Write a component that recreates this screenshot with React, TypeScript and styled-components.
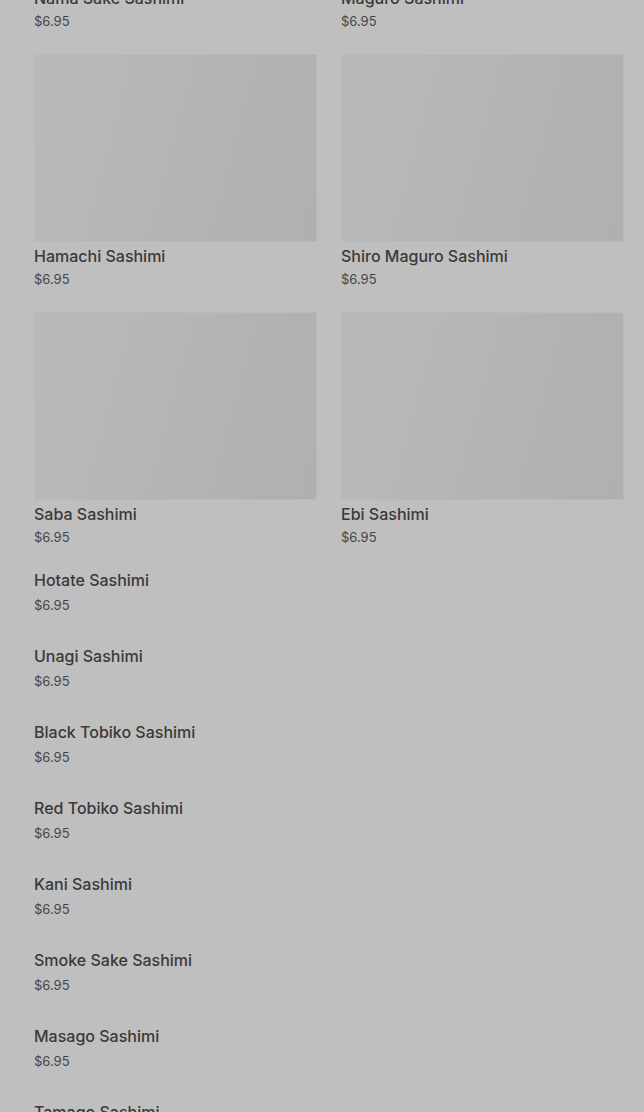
import React from "react";
import styled, { createGlobalStyle } from "styled-components";

type Item = { name: string; price: string };

const withImage: Item[] = [
  { name: "Nama Sake Sashimi", price: "$6.95" },
  { name: "Maguro Sashimi", price: "$6.95" },
  { name: "Hamachi Sashimi", price: "$6.95" },
  { name: "Shiro Maguro Sashimi", price: "$6.95" },
  { name: "Saba Sashimi", price: "$6.95" },
  { name: "Ebi Sashimi", price: "$6.95" },
];

const plain: Item[] = [
  { name: "Hotate Sashimi", price: "$6.95" },
  { name: "Unagi Sashimi", price: "$6.95" },
  { name: "Black Tobiko Sashimi", price: "$6.95" },
  { name: "Red Tobiko Sashimi", price: "$6.95" },
  { name: "Kani Sashimi", price: "$6.95" },
  { name: "Smoke Sake Sashimi", price: "$6.95" },
  { name: "Masago Sashimi", price: "$6.95" },
  { name: "Tamago Sashimi", price: "$6.95" },
];

const GlobalStyle = createGlobalStyle`
  html, body {
    margin: 0;
    padding: 0;
    background: #bfbfbf;
    overflow: hidden;
  }
  body {
    font-family: Inter, "Noto Sans", "Liberation Sans", sans-serif;
    -webkit-font-smoothing: antialiased;
  }
`;

const Page = styled.div`
  height: 1112px;
  overflow: hidden;
  background: #bfbfbf;
`;

// the list is scrolled part way down, so the first row is clipped at the top
const Scroller = styled.div`
  margin-top: -204px;
  padding: 0 20px 40px 34px;
  display: flex;
  flex-direction: column;
  gap: 24px;
`;

const Grid = styled.div`
  display: grid;
  grid-template-columns: 1fr 1fr;
  column-gap: 24px;
  row-gap: 24px;
`;

const Card = styled.div`
  display: flex;
  flex-direction: column;
`;

const Thumb = styled.div`
  height: 188px;
  background: linear-gradient(
    105deg,
    #b9b9b9 0%,
    #b7b7b7 30%,
    #b4b4b4 55%,
    #b1b1b1 80%,
    #b0b0b0 100%
  );
  box-shadow: inset 0 0 0 1px #bababa;
`;

const Title = styled.p<{ $gap?: number }>`
  margin: ${(p) => p.$gap ?? 4}px 0 0;
  font-size: 16px;
  line-height: 20px;
  font-weight: 500;
  color: #393939;
`;

const Price = styled.p<{ $gap?: number }>`
  margin: ${(p) => p.$gap ?? 4}px 0 0;
  font-size: 13px;
  line-height: 18px;
  color: #454545;
`;

const List = styled.div`
  display: flex;
  flex-direction: column;
  gap: 32px;
`;

const Row = styled.div`
  display: flex;
  flex-direction: column;
`;

export default function App() {
  return (
    <Page>
      <GlobalStyle />
      <Scroller>
        <Grid>
          {withImage.map((it) => (
            <Card key={it.name}>
              <Thumb />
              <Title>{it.name}</Title>
              <Price>{it.price}</Price>
            </Card>
          ))}
        </Grid>
        <List>
          {plain.map((it) => (
            <Row key={it.name}>
              <Title $gap={0}>{it.name}</Title>
              <Price $gap={6}>{it.price}</Price>
            </Row>
          ))}
        </List>
      </Scroller>
    </Page>
  );
}
